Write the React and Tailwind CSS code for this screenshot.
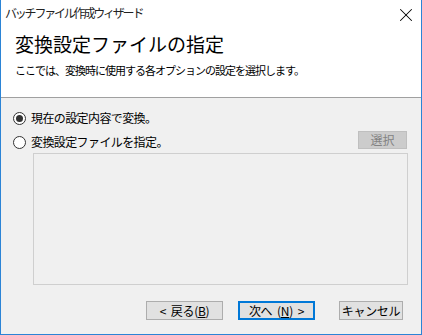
import { X } from 'lucide-react'

const FONT = "font-['Meiryo_UI','Noto_Sans_CJK_JP',sans-serif]"

function Radio({ checked, label }) {
  return (
    <label className="flex items-center h-[16px]">
      <span className="w-[13px] h-[13px] rounded-full border border-[#333333] bg-white flex items-center justify-center shrink-0">
        {checked && <span className="w-[7px] h-[7px] rounded-full bg-[#333333]" />}
      </span>
      <span className="ml-[5px] text-[12px] leading-[12px] tracking-[-0.6px] text-black">{label}</span>
    </label>
  )
}

function Button({ children, primary, className = '' }) {
  return (
    <button
      className={`h-[19px] flex items-center justify-center whitespace-pre text-[12px] leading-[12px] tracking-[-0.3px] text-black bg-[#e1e1e1] ${
        primary ? 'border-2 border-[#0078d7]' : 'border border-[#adadad]'
      } ${className}`}
    >
      {children}
    </button>
  )
}

export default function App() {
  return (
    <div className={`w-[422px] h-[335px] border-x border-b border-[#2b84d6] bg-[#f0f0f0] flex flex-col ${FONT}`}>
      <div className="h-[98px] bg-white border-b border-[#a0a0a0] flex flex-col">
        <div className="h-[26px] flex items-center justify-between pl-[4px] pr-[4px]">
          <span className="text-[12px] leading-[12px] tracking-[-2.2px] text-[#222222]">バッチファイル作成ウィザード</span>
          <X size={22} strokeWidth={1.1} className="text-black mt-[3px]" />
        </div>
        <h1 className="mt-[8px] pl-[14px] text-[19px] leading-[20px] text-black">変換設定ファイルの指定</h1>
        <p className="mt-[10px] pl-[14px] text-[11px] leading-[12px] tracking-[-1px] text-black">
          ここでは、変換時に使用する各オプションの設定を選択します。
        </p>
      </div>

      <div className="flex-1 flex flex-col pl-[12px] pr-[13px] pt-[12px]">
        <Radio checked label="現在の設定内容で変換。" />
        <div className="mt-[5px] flex items-start justify-between">
          <div className="mt-[3px]">
            <Radio label="変換設定ファイルを指定。" />
          </div>
          <button className="mr-[1px] w-[49px] h-[18px] bg-[#cccccc] border border-[#bfbfbf] text-[12px] leading-[12px] text-[#838383]">
            選択
          </button>
        </div>
        <div className="mt-[3px] ml-[20px] h-[132px] border border-[#cfcfcf] bg-[#f0f0f0]" />

        <div className="mt-[16px] flex justify-end pr-[5px]">
          <Button className="w-[77px]">
            {'<  戻る('}<span className="underline">B</span>{')'}
          </Button>
          <Button primary className="w-[77px] ml-[15px]">
            {'次へ  ('}<span className="underline">N</span>{')  >'}
          </Button>
          <Button className="w-[64px] ml-[24px]">キャンセル</Button>
        </div>
      </div>
    </div>
  )
}
